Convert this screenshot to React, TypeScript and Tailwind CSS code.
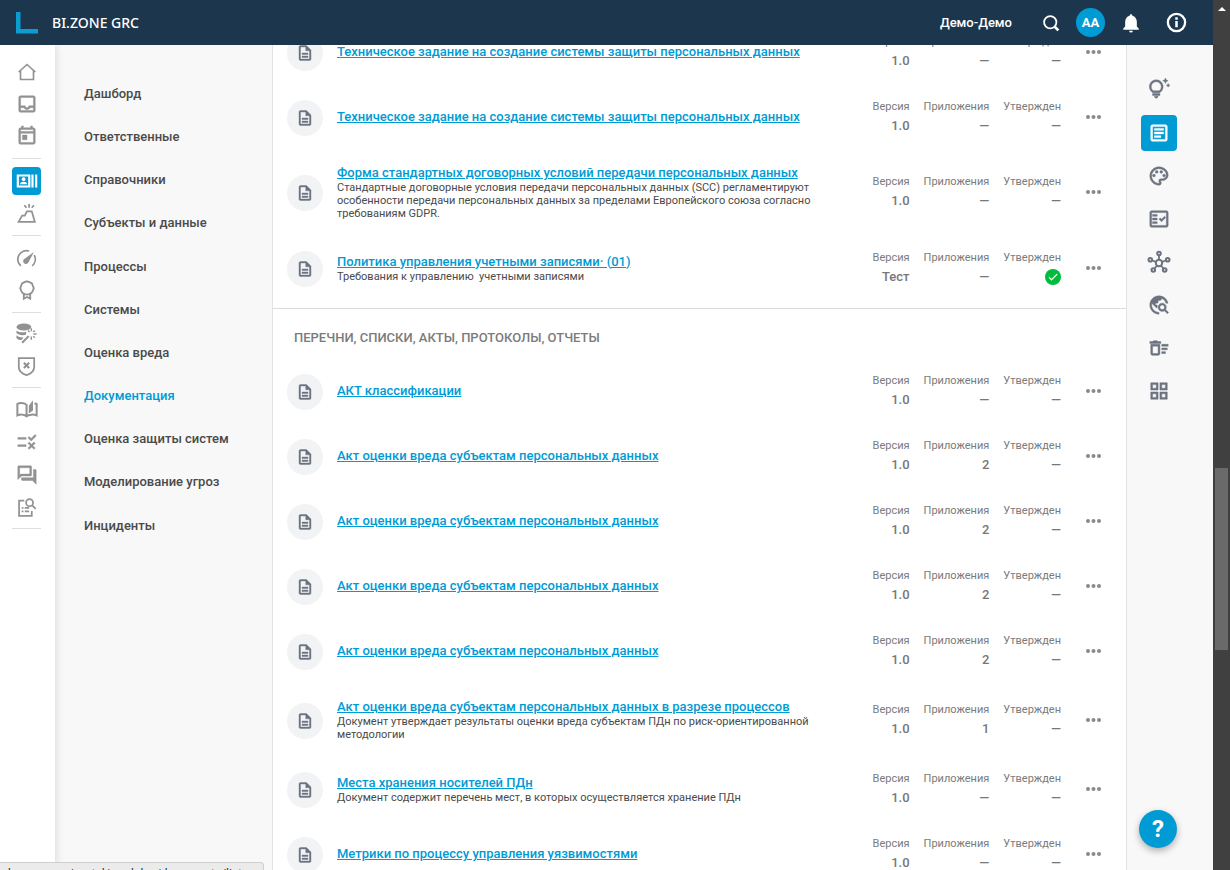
import type { ReactNode } from "react";
import { IconContext, type IconType } from "react-icons";
import {
  MdCheck,
  MdOutlineArticle,
  MdOutlineDeleteSweep,
  MdOutlineDescription,
  MdOutlineFactCheck,
  MdOutlineForum,
  MdOutlineGridView,
  MdOutlineInbox,
  MdOutlinePalette,
  MdOutlineTipsAndUpdates,
  MdOutlineToday,
  MdRule,
  MdTravelExplore,
} from "react-icons/md";

interface Doc {
  title: string;
  desc?: string;
  version?: string;
  attachments?: string;
  approved?: boolean;
}

interface RailItem {
  label: string;
  icon: ReactNode;
  active?: boolean;
}

const MENU = [
  "Дашборд",
  "Ответственные",
  "Справочники",
  "Субъекты и данные",
  "Процессы",
  "Системы",
  "Оценка вреда",
  "Документация",
  "Оценка защиты систем",
  "Моделирование угроз",
  "Инциденты",
];

const POLICIES: Doc[] = [
  { title: "Техническое задание на создание системы защиты персональных данных" },
  { title: "Техническое задание на создание системы защиты персональных данных" },
  {
    title: "Форма стандартных договорных условий передачи персональных данных",
    desc: "Стандартные договорные условия передачи персональных данных (SCC) регламентируют особенности передачи персональных данных за пределами Европейского союза согласно требованиям GDPR.",
  },
  {
    title: "Политика управления учетными записями· (01)",
    desc: "Требования к управлению \u00a0учетными записями",
    version: "Тест",
    approved: true,
  },
];

const REPORTS: Doc[] = [
  { title: "АКТ классификации" },
  { title: "Акт оценки вреда субъектам персональных данных", attachments: "2" },
  { title: "Акт оценки вреда субъектам персональных данных", attachments: "2" },
  { title: "Акт оценки вреда субъектам персональных данных", attachments: "2" },
  { title: "Акт оценки вреда субъектам персональных данных", attachments: "2" },
  {
    title: "Акт оценки вреда субъектам персональных данных в разрезе процессов",
    desc: "Документ утверждает результаты оценки вреда субъектам ПДн по риск-ориентированной методологии",
    attachments: "1",
  },
  {
    title: "Места хранения носителей ПДн",
    desc: "Документ содержит перечень мест, в которых осуществляется хранение ПДн",
  },
  { title: "Метрики по процессу управления уязвимостями" },
];

function Svg({ children, size = 20 }: { children: ReactNode; size?: number }) {
  return (
    <svg
      width={size}
      height={size}
      viewBox="0 0 24 24"
      fill="none"
      stroke="currentColor"
      strokeWidth="2"
      aria-hidden="true"
    >
      {children}
    </svg>
  );
}

function HomeIcon() {
  return (
    <Svg>
      <path d="M2 12 12 3l10 9M4.200 10.500V21h15.600V10.500" />
    </Svg>
  );
}

function ActorsIcon() {
  return (
    <Svg size={22}>
      <path d="M2 6h12.500v12H2z" strokeWidth="2.400" />
      <path d="M18 5v14M22 5v14" strokeWidth="2.400" />
      <circle cx="8.300" cy="10" r="2" fill="currentColor" stroke="none" />
      <path d="M4.300 15.500c0-2 2.500-2.800 4-2.800s4 .8 4 2.800z" fill="currentColor" stroke="none" />
    </Svg>
  );
}

function VolcanoIcon() {
  return (
    <Svg size={21}>
      <path d="M3 21.500h18.500L18 9.500h-5.500l-2.500 5H7zM15 1v4.500M9.500 2.500l2.500 3M20.500 2.500l-2.500 3" />
    </Svg>
  );
}

function GaugeIcon() {
  return (
    <Svg size={21}>
      <path d="M5.500 20.500A10 10 0 0 1 15 3.400M20.800 8.200a10 10 0 0 1-2.300 12.300" />
      <path
        d="M20.500 4.500 10.200 12a3.200 3.200 0 1 0 4 4.500z"
        fill="currentColor"
        stroke="none"
      />
    </Svg>
  );
}

function MedalIcon() {
  return (
    <Svg size={22}>
      <path d="m12 2.500 2.700 1 2.700 1.300 1 2.700 1 2.500-1 2.700-1.300 2.500-2.600 1.300-2.500.500-2.500-.500-2.600-1.300-1.300-2.500-1-2.700 1-2.500 1-2.700 2.700-1.300zM8.500 16v5.500l3.500-1.800 3.500 1.800V16" />
    </Svg>
  );
}

function DatabaseIcon() {
  return (
    <Svg size={21}>
      <ellipse cx="9" cy="4.500" rx="8.500" ry="4" fill="currentColor" stroke="none" />
      <path
        d="M.5 8.500c2 2.300 7.500 2.800 11 1.500v3.500C7 14.500 2 13.500.5 11.500zM.5 14c2 2 5 2.600 8 2.500l-2.200 3C3.500 19.300 1.200 18.500.5 17z"
        fill="currentColor"
        stroke="none"
      />
      <path d="m7 22.500 7.500-7.500" strokeWidth="2.400" />
      <path
        d="M17.500 6v3.500M17.500 15.500V19M20 12.500h3.500M13.800 8.500l1.700 1.700M21.500 8.500l-1.800 1.800M21.500 16.800l-1.800-1.800"
        strokeWidth="1.600"
      />
    </Svg>
  );
}

function ShieldIcon() {
  return (
    <Svg size={21}>
      <path d="M3.200 2.500h17.600v10c0 4.500-3.800 7.800-8.800 9.300-5-1.500-8.800-4.800-8.800-9.300z" />
      <path d="m9 7.800 6 6M15 7.800l-6 6" strokeWidth="2.400" />
    </Svg>
  );
}

function BookIcon() {
  return (
    <Svg size={22}>
      <path
        d="M11.500 20V7.500C9.500 5 4 5 1.500 6.500V19c3-1.300 7.500-1.300 10 1 2.500-2.300 8-2.300 11-1V6.500l-2.300-.7"
        strokeWidth="2.200"
      />
      <path d="m14 8.500 4.500-6v11L14 17z" fill="currentColor" stroke="none" />
    </Svg>
  );
}

function DocSearchIcon() {
  return (
    <Svg size={21}>
      <path d="M9.500 4H3.500v17.500h14.500V16" />
      <circle cx="15.500" cy="6.500" r="4" />
      <path d="m18.500 9.500 4 4M10 12.500h5M10 16.500h5M6.500 12.500h2M6.500 16.500h2" />
    </Svg>
  );
}

function HubIcon() {
  return (
    <Svg size={24}>
      <circle cx="12" cy="13" r="3.200" />
      <circle cx="12" cy="3.500" r="1.800" />
      <circle cx="3.300" cy="9.800" r="1.800" />
      <circle cx="20.700" cy="9.800" r="1.800" />
      <circle cx="6.300" cy="20" r="1.800" />
      <circle cx="17.700" cy="20" r="1.800" />
      <path
        d="M12 5.500V10M5.200 10.500l3.800 1.300M18.800 10.500l-3.800 1.300M7.600 18.500l2.400-3M16.400 18.500l-2.400-3"
        strokeWidth="1.800"
      />
    </Svg>
  );
}

function SearchIcon() {
  return (
    <Svg size={18}>
      <circle cx="11" cy="11" r="8.200" strokeWidth="2.400" />
      <path d="m17 17 4.800 4.800" strokeWidth="3.600" />
    </Svg>
  );
}

function BellIcon() {
  return (
    <Svg size={20}>
      <path
        d="M12 1.500c-1 0-1.700.7-1.700 1.800C7 4.200 5 7 5 10.500v5.800l-2.300 2.300v1.600h18.600v-1.600L19 16.300v-5.800c0-3.500-2-6.300-5.300-7.200 0-1.100-.7-1.800-1.700-1.800zM9.800 21.200a2.200 2.200 0 0 0 4.400 0z"
        fill="currentColor"
        stroke="none"
      />
    </Svg>
  );
}

function InfoIcon() {
  return (
    <Svg size={23}>
      <circle cx="12" cy="12" r="9" strokeWidth="2.400" />
      <path d="M12 10.500v6.500M12 6.500v2.500" strokeWidth="2.600" />
    </Svg>
  );
}

const RAIL_TOP: RailItem[][] = [
  [
    { label: "Главная", icon: <HomeIcon /> },
    { label: "Входящие", icon: <MdOutlineInbox size={22} /> },
    { label: "Календарь", icon: <MdOutlineToday size={22} /> },
  ],
  [
    { label: "Персональные данные", icon: <ActorsIcon />, active: true },
    { label: "Риски", icon: <VolcanoIcon /> },
  ],
  [
    { label: "Показатели", icon: <GaugeIcon /> },
    { label: "Соответствие", icon: <MedalIcon /> },
  ],
];

const RAIL_BOTTOM: RailItem[][] = [
  [
    { label: "Активы", icon: <DatabaseIcon /> },
    { label: "Угрозы", icon: <ShieldIcon /> },
  ],
  [
    { label: "База знаний", icon: <BookIcon /> },
    { label: "Проверки", icon: <MdRule size={22} /> },
    { label: "Обсуждения", icon: <MdOutlineForum size={22} /> },
    { label: "Поиск документов", icon: <DocSearchIcon /> },
  ],
];

const TOOLS: { label: string; icon: IconType | typeof HubIcon; active?: boolean }[] = [
  { label: "Статьи", icon: MdOutlineArticle, active: true },
  { label: "Оформление", icon: MdOutlinePalette },
  { label: "Проверка", icon: MdOutlineFactCheck },
  { label: "Связи", icon: HubIcon },
  { label: "Обзор", icon: MdTravelExplore },
  { label: "Корзина", icon: MdOutlineDeleteSweep },
  { label: "Плитка", icon: MdOutlineGridView },
];

function RailButton({ item }: { item: RailItem }) {
  return (
    <button
      type="button"
      aria-label={item.label}
      className={
        item.active
          ? "flex h-7 w-full items-center justify-center rounded bg-[#009bd4] text-white"
          : "flex h-7 w-full items-center justify-center text-[#929292]"
      }
    >
      {item.icon}
    </button>
  );
}

function Header() {
  return (
    <header className="z-10 flex h-[45px] shrink-0 items-center bg-[#1c364d] pr-[25px] pl-4 text-white">
      <svg width="22" height="22" viewBox="0 0 22 22" aria-hidden="true">
        <path d="M0 0h4.500v17H22v4.500H0z" fill="#0d9cd0" />
      </svg>
      <span className="ml-[14px] font-['Noto_Sans'] text-[14px] leading-5 font-medium">
        BI.ZONE GRC
      </span>
      <div className="ml-auto flex items-center">
        <span className="mr-[30px] text-[13px] leading-5 font-medium">Демо-Демо</span>
        <button type="button" aria-label="Поиск">
          <SearchIcon />
        </button>
        <button
          type="button"
          className="ml-4 size-[29px] rounded-full bg-[#009bd4] text-[13px] font-bold"
        >
          AA
        </button>
        <button type="button" aria-label="Уведомления" className="ml-4">
          <BellIcon />
        </button>
        <button type="button" aria-label="Информация" className="ml-6">
          <InfoIcon />
        </button>
      </div>
    </header>
  );
}

function Stat({ label, children }: { label: string; children: ReactNode }) {
  return (
    <div className="text-right">
      <dt className="text-[11px] leading-4 text-[#7b7b7b]">{label}</dt>
      <dd className="flex h-[22px] items-center justify-end text-[13px] font-medium text-[#777]">
        {children}
      </dd>
    </div>
  );
}

function DocRow({ doc }: { doc: Doc }) {
  return (
    <li className="flex min-h-[65px] items-center py-[14px] pr-6 pl-[14px]">
      <span className="flex size-9 shrink-0 items-center justify-center rounded-full bg-[#f1f3f5] text-[#6b7280]">
        <MdOutlineDescription size={18} />
      </span>
      <div className="ml-[14px] min-w-0 flex-1 pb-0.5">
        <a
          href="#doc"
          className="block text-[13px] leading-[17px] font-medium text-[#009bd4] underline"
        >
          {doc.title}
        </a>
        {doc.desc && (
          <p className="max-w-[480px] text-[11px] leading-[13px] text-[#4a4a4a]">{doc.desc}</p>
        )}
      </div>
      <dl className="-my-1.5 flex shrink-0 gap-[14px]">
        <Stat label="Версия">{doc.version ?? "1.0"}</Stat>
        <Stat label="Приложения">{doc.attachments ?? "—"}</Stat>
        <Stat label="Утвержден">
          {doc.approved ? (
            <span className="flex size-4 items-center justify-center rounded-full bg-[#00bb3c] text-white">
              <MdCheck size={12} aria-label="Да" />
            </span>
          ) : (
            "—"
          )}
        </Stat>
      </dl>
      <button type="button" aria-label="Действия" className="ml-6 pb-0.5 text-[#8a8a8a]">
        <svg width="17" height="6" viewBox="0 0 17 6" fill="currentColor" aria-hidden="true">
          <circle cx="3" cy="3" r="2" />
          <circle cx="8.500" cy="3" r="2" />
          <circle cx="14" cy="3" r="2" />
        </svg>
      </button>
    </li>
  );
}

export default function App() {
  return (
    <IconContext.Provider value={{ attr: { strokeWidth: "0.5" } }}>
      <div className="flex h-screen overflow-hidden bg-white font-[Roboto,sans-serif] [&_path[fill=none]]:stroke-none [&_rect[fill=none]]:stroke-none">
        <div className="flex min-w-0 flex-1 flex-col">
          <Header />
          <div className="flex min-h-0 flex-1">
            <nav
              aria-label="Разделы"
              className="z-[1] w-[55px] shrink-0 bg-white pt-[5px] pr-[14px] pl-3 shadow-[1px_0_8px_rgba(0,0,0,0.12)]"
            >
              {RAIL_TOP.map((group, i) => (
                <div key={i} className="border-b border-[#dedede] py-1.5">
                  {group.map((item) => (
                    <div key={item.label} className="flex h-8 items-center">
                      <RailButton item={item} />
                    </div>
                  ))}
                </div>
              ))}
              {RAIL_BOTTOM.map((group, i) => (
                <div key={i} className="border-b border-[#dedede] py-1">
                  {group.map((item) => (
                    <div key={item.label} className="flex h-[33px] items-center">
                      <RailButton item={item} />
                    </div>
                  ))}
                </div>
              ))}
            </nav>

            <nav
              aria-label="Меню"
              className="w-[218px] shrink-0 border-r border-[#e3e3e3] bg-[#f8f8f8] pt-[27px] pl-[29px]"
            >
              <ul className="grid h-[475px] auto-rows-fr">
                {MENU.map((name) => (
                  <li key={name} className="flex items-center">
                    <a
                      href="#menu"
                      className={
                        name === "Документация"
                          ? "text-[13px] font-medium text-[#009bd4]"
                          : "text-[13px] font-medium text-[#4a4a4a]"
                      }
                    >
                      {name}
                    </a>
                  </li>
                ))}
              </ul>
            </nav>

            <main className="min-w-0 flex-1 overflow-hidden">
              <div className="-mt-[25px]">
                <ul className="border-b border-[#dcdcdc] pb-[7px]">
                  {POLICIES.map((doc, i) => (
                    <DocRow key={i} doc={doc} />
                  ))}
                </ul>
                <h2 className="pt-5 pb-[13px] pl-[21px] text-[13px] leading-[17px] font-medium text-[#7b7b7b]">
                  ПЕРЕЧНИ, СПИСКИ, АКТЫ, ПРОТОКОЛЫ, ОТЧЕТЫ
                </h2>
                <ul>
                  {REPORTS.map((doc, i) => (
                    <DocRow key={i} doc={doc} />
                  ))}
                </ul>
              </div>
            </main>

            <aside className="flex w-[87px] shrink-0 flex-col border-l border-[#e0e3e8] bg-[#f8f8f8] pt-[26px] pb-[22px] text-[#6b7280]">
              <button
                type="button"
                aria-label="Подсказки"
                className="mb-2 ml-[14px] flex size-9 items-center justify-center"
              >
                <MdOutlineTipsAndUpdates size={22} />
              </button>
              <div className="ml-[14px] flex flex-col gap-[7px]">
                {TOOLS.map(({ label, icon: Icon, active }) => (
                  <button
                    key={label}
                    type="button"
                    aria-label={label}
                    className={
                      active
                        ? "flex size-9 items-center justify-center rounded bg-[#009bd4] text-white"
                        : "flex size-9 items-center justify-center"
                    }
                  >
                    <Icon size={22} />
                  </button>
                ))}
              </div>
              <button
                type="button"
                aria-label="Помощь"
                className="mt-auto ml-[12px] size-[38px] rounded-full bg-[#009bd4] text-[24px] leading-none font-bold text-white shadow-[0_3px_7px_rgba(0,0,0,0.3)]"
              >
                ?
              </button>
            </aside>
          </div>
        </div>

        <div className="flex w-[17px] shrink-0 flex-col bg-[#404040]">
          <div className="flex h-[17px] items-center justify-center text-white">
            <svg width="8" height="4" viewBox="0 0 8 4" fill="currentColor" aria-hidden="true">
              <path d="M0 4l4-4 4 4z" />
            </svg>
          </div>
          <div className="mx-0.5 mt-[451px] h-[182px] bg-[#6a6a6a]" />
        </div>

        <div className="absolute bottom-0 left-0 z-20 h-2 w-[264px] overflow-hidden rounded-tr border-t border-r border-[#cfcfcf] bg-[#ebebeb] pt-[3px] pl-1 text-[12px] leading-4 text-[#333]">
          demo.grc.ru/portal/modules/documents/list
        </div>
      </div>
    </IconContext.Provider>
  );
}
